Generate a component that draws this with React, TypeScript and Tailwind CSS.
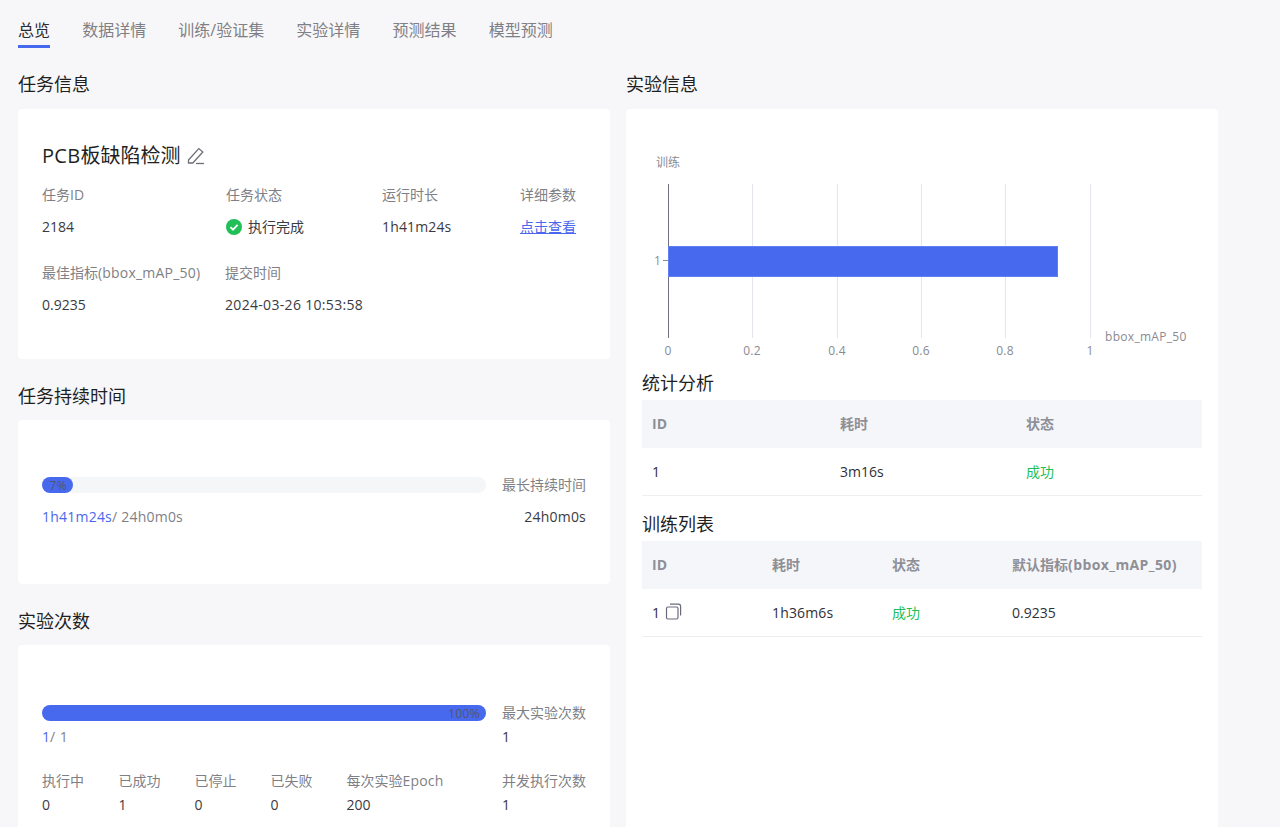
import React from "react";

const font = { fontFamily: '"Open Sans", "Noto Sans CJK SC", sans-serif' };

function Heading({ children, className = "" }: { children: React.ReactNode; className?: string }) {
  return <h2 className={"text-[18px] leading-[25px] font-normal text-[#1f1f1f] " + className}>{children}</h2>;
}

function Field({ label, width, children }: { label: React.ReactNode; width: string; children: React.ReactNode }) {
  return (
    <div className={width}>
      <div className="text-[14px] leading-[22px] text-[#7f7f86]">{label}</div>
      <div className="mt-[10px] flex items-center text-[14px] leading-[22px] text-[#3a3a3f]">{children}</div>
    </div>
  );
}

function Progress({ pct, width }: { pct: string; width: number }) {
  return (
    <div className="h-4 w-[444px] rounded-full bg-[#f5f6f8]">
      <div
        className="h-4 rounded-full bg-[#4669ee] pr-[6px] text-right text-[12px] leading-[18px] tracking-[0.3px] text-[#55566a]"
        style={{ width }}
      >
        {pct}
      </div>
    </div>
  );
}

function Tile({ label, value, width }: { label: React.ReactNode; value: string; width: string }) {
  return (
    <div className={width}>
      <div className="text-[14px] leading-[22px] text-[#7f7f86]">{label}</div>
      <div className="mt-[2px] text-[14px] leading-[22px] text-[#3a3a3f]">{value}</div>
    </div>
  );
}

function Chart() {
  const ticks = [
    { x: 26, l: "0" },
    { x: 110, l: "0.2" },
    { x: 195, l: "0.4" },
    { x: 279, l: "0.6" },
    { x: 363, l: "0.8" },
    { x: 448, l: "1" },
  ];
  return (
    <svg width="560" height="221" viewBox="0 0 560 221" className="block">
      <text x="14" y="17" fontSize="12" fill="#8a8a93">训练</text>
      {ticks.slice(1).map((t) => (
        <line key={t.l} x1={t.x + 0.5} x2={t.x + 0.5} y1="34" y2="188" stroke="#e3e5ef" />
      ))}
      <line x1="26.5" x2="26.5" y1="34" y2="188" stroke="#6f7180" />
      <line x1="21" x2="26" y1="110.5" y2="110.5" stroke="#8a8a93" />
      <rect x="26.5" y="96.5" width="389" height="30" fill="#4669ee" stroke="#5f7ff5" />
      <text x="12" y="115" fontSize="12" fill="#8a8a93">1</text>
      {ticks.map((t) => (
        <text key={t.l} x={t.x} y="205" fontSize="12" letterSpacing="0.2" fill="#8a8a93" textAnchor="middle">
          {t.l}
        </text>
      ))}
      <text x="463" y="191" fontSize="12" letterSpacing="0.3" fill="#8a8a93">bbox_mAP_50</text>
    </svg>
  );
}

function DataTable({ cols, head, row }: { cols: string; head: React.ReactNode[]; row: React.ReactNode[] }) {
  return (
    <div className="w-[560px]">
      <div className={"grid h-12 items-center bg-[#f5f6fa] pb-[2px] text-[14px] font-bold text-[#8f8f96] " + cols}>
        {head.map((h, i) => (
          <div key={i} className="pl-[10px]">{h}</div>
        ))}
      </div>
      <div className={"grid h-12 items-center border-b border-[#eceef2] text-[14px] text-[#2f2f35] " + cols}>
        {row.map((c, i) => (
          <div key={i} className="flex items-center pl-[10px]">{c}</div>
        ))}
      </div>
    </div>
  );
}

export default function App() {
  const tabs = ["数据详情", "训练/验证集", "实验详情", "预测结果", "模型预测"];
  return (
    <div className="h-[827px] w-[1280px] overflow-hidden bg-[#f7f7f9] pl-[18px] pt-[18px]" style={font}>
      <nav className="flex h-[30px] gap-[32.15px] text-[16px] leading-6">
        <div className="h-[30px] border-b-[3px] border-[#4669ee] text-[#2a2a30]">总览</div>
        {tabs.map((t) => (
          <div key={t} className="text-[#7f7f86]">{t}</div>
        ))}
      </nav>

      <div className="mt-6 flex gap-4">
        <div className="w-[592px] shrink-0">
          <Heading className="mb-3">任务信息</Heading>
          <section className="h-[250px] rounded bg-white pl-6 pt-[33px]">
            <div className="flex h-7 items-center text-[20px] text-[#1f1f24]">
              <span className="tracking-[0.3px]">PCB</span>板缺陷检测
              <svg width="18" height="18" viewBox="0 0 18 18" fill="none" stroke="#6f6f78" strokeWidth="1.3" className="ml-[7px]">
                <path d="M1.5 13 L11.8 1.6 L15.8 5 L5.8 16 L1.5 16 Z" />
                <path d="M9 16.5 H17" />
              </svg>
            </div>
            <div className="mt-[14px] flex">
              <Field label="任务ID" width="w-[184px]">2184</Field>
              <Field label="任务状态" width="w-[156px]">
                <svg width="16" height="16" viewBox="0 0 16 16" className="mr-[6px]">
                  <circle cx="8" cy="8" r="8" fill="#21bf57" />
                  <path d="M4.4 8.2 L7 10.7 L11.6 5.8" fill="none" stroke="#fff" strokeWidth="1.8" />
                </svg>
                执行完成
              </Field>
              <Field label="运行时长" width="w-[138px]"><span className="tracking-[0.15px]">1h41m24s</span></Field>
              <Field label="详细参数" width="w-[66px]">
                <span className="text-[#4a67ee] underline">点击查看</span>
              </Field>
            </div>
            <div className="mt-6 flex">
              <Field label={<>最佳指标<span className="tracking-[0.2px]">(bbox_mAP_50)</span></>} width="w-[183px]">0.9235</Field>
              <Field label="提交时间" width="w-[200px]"><span className="tracking-[0.32px]">2024-03-26 10:53:58</span></Field>
            </div>
          </section>

          <Heading className="mb-[11px] mt-[25px]">任务持续时间</Heading>
          <section className="h-[164px] rounded bg-white pl-6 pt-[54px]">
            <div className="flex w-[544px] items-center gap-4">
              <Progress pct="7%" width={31} />
              <div className="text-[14px] leading-[22px] text-[#7f7f86]">最长持续时间</div>
            </div>
            <div className="mt-[10px] flex w-[544px] justify-between text-[14px] leading-[22px] tracking-[0.22px]">
              <div className="text-[#7f7f86]"><span className="text-[#4a67ee]">1h41m24s</span>/ 24h0m0s</div>
              <div className="text-[#3a3a3f]">24h0m0s</div>
            </div>
          </section>

          <Heading className="mb-[11px] mt-[25px]">实验次数</Heading>
          <section className="h-[200px] rounded bg-white pl-6 pt-[57px]">
            <div className="flex w-[544px] items-center gap-4">
              <Progress pct="100%" width={444} />
              <div className="text-[14px] leading-[22px] text-[#7f7f86]">最大实验次数</div>
            </div>
            <div className="mt-[2px] flex w-[544px] gap-4 text-[14px] leading-[22px]">
              <div className="w-[444px] text-[#7f7f86]"><span className="text-[#4a67ee]">1</span><span className="tracking-[0.5px]">/ 1</span></div>
              <div className="text-[#3a3a3f]">1</div>
            </div>
            <div className="mt-[22px] flex">
              <Tile label="执行中" value="0" width="w-[76.5px]" />
              <Tile label="已成功" value="1" width="w-[76px]" />
              <Tile label="已停止" value="0" width="w-[76px]" />
              <Tile label="已失败" value="0" width="w-[76px]" />
              <Tile label={<>每次实验<span className="tracking-[0.2px]">Epoch</span></>} value="200" width="w-[155.5px]" />
              <Tile label="并发执行次数" value="1" width="w-[84px]" />
            </div>
          </section>
        </div>

        <div className="w-[592px] shrink-0">
          <Heading className="mb-3">实验信息</Heading>
          <section className="h-[730px] rounded bg-white px-4 pt-[41px]">
            <Chart />
            <Heading className="mb-1">统计分析</Heading>
            <DataTable
              cols="grid-cols-[188px_186px_186px]"
              head={["ID", "耗时", "状态"]}
              row={["1", "3m16s", <span className="text-[#21bf57]">成功</span>]}
            />
            <Heading className="mb-1 mt-4">训练列表</Heading>
            <DataTable
              cols="grid-cols-[120px_120px_120px_200px]"
              head={["ID", "耗时", "状态", <>默认指标<span className="tracking-[0.4px]">(bbox_mAP_50)</span></>]}
              row={[
                <>
                  1
                  <svg width="17" height="17" viewBox="0 0 17 17" fill="none" stroke="#6a6c7c" strokeWidth="1.2" className="-mt-[2px] ml-[5px]">
                    <rect x="1.5" y="4" width="11.5" height="12" rx="1.5" />
                    <path d="M5 1.2 H13.5 Q15.6 1.2 15.6 3.3 V12.5" />
                  </svg>
                </>,
                <span className="tracking-[0.15px]">1h36m6s</span>,
                <span className="text-[#21bf57]">成功</span>,
                "0.9235",
              ]}
            />
          </section>
        </div>
      </div>
    </div>
  );
}
